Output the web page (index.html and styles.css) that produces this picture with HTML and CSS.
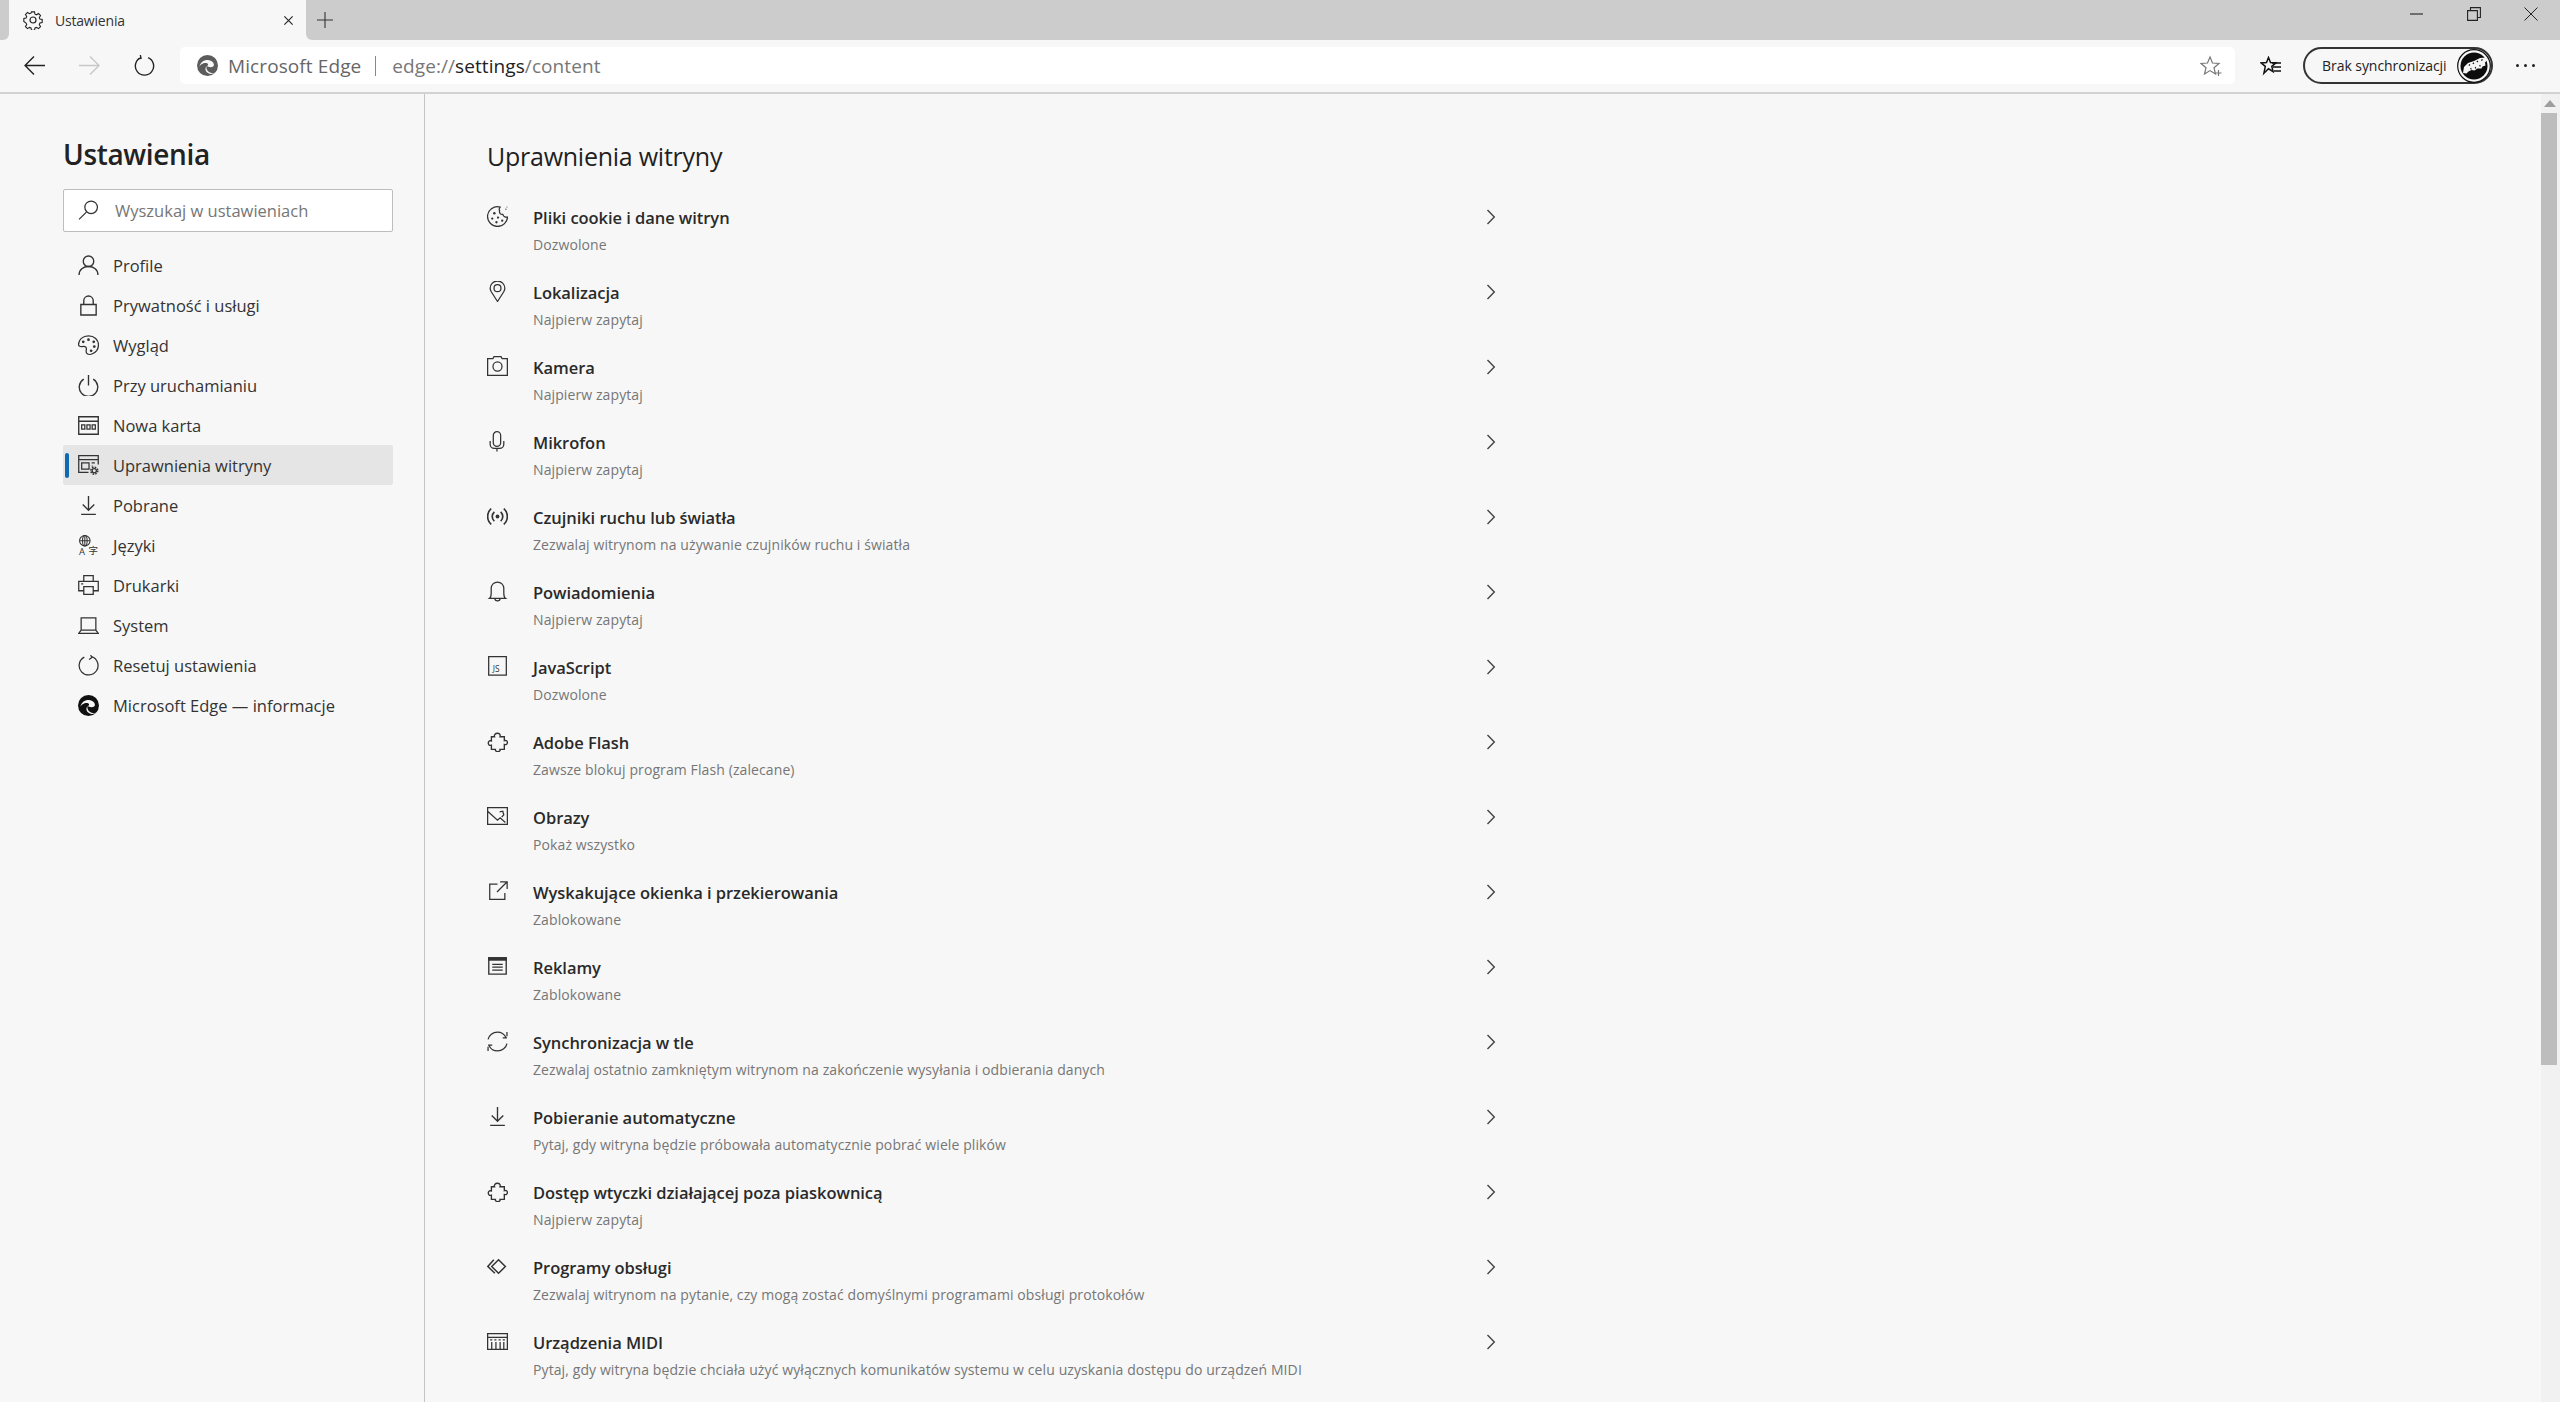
FILE: index.html
```html
<!DOCTYPE html>
<html lang="pl">
<head>
<meta charset="utf-8">
<title>Ustawienia</title>
<link rel="stylesheet" href="styles.css">
</head>
<body>
<svg class="defs" width="0" height="0" aria-hidden="true">
  <defs>
    <symbol id="edge" viewBox="0 0 20 20">
      <circle cx="10" cy="10" r="10" fill="currentColor"/>
      <path d="M2.2 11.5C3 7 6.500 4.500 10.500 4.700c3 .2 5.300 2 5.600 4.300.2 1.600-1.200 2.600-3.200 2.600-1.600 0-3-.4-3.400-1.100 1.300-.6 1.500-1.800.5-2.500C7.500 6.700 2.900 8.600 2.200 11.500z" fill="#f7f7f7"/>
      <path d="M9 10.500c-.5 3 1.500 6.500 5.500 6.800 1.500.1 3-.5 4-1.400-1.400 2-4.400 2.400-6.400 1.900-3.500-.9-5.300-4.300-3.100-7.300z" fill="#f7f7f7"/>
    </symbol>
    <symbol id="puzzle" viewBox="0 0 20 20">
      <path d="M7.200 5.500C5.800 1.200 13.800.8 12.400 5.500H16.500V9.200C20.400 7.800 20.400 14.200 16.500 12.800V17.500H12.400C13.600 20.400 7 20.400 8 17.500H4.200V13.500C.2 15 .2 8 4.200 9.500V5.500z" fill="none" stroke="currentColor" stroke-width="1.300" stroke-linejoin="miter"/>
    </symbol>
    <symbol id="download" viewBox="0 0 20 20">
      <path d="M10 1v13M4.500 9l5.500 5.500L15.500 9M3 18.500h14" fill="none" stroke="currentColor" stroke-width="1.300"/>
    </symbol>
    <symbol id="chev" viewBox="0 0 12 16">
      <path d="M2.500 1l6.800 7-6.800 7" fill="none" stroke="currentColor" stroke-width="1.400"/>
    </symbol>
  </defs>
</svg>

<header class="tabstrip">
  <div class="strip-left"></div>
  <div class="tab">
    <svg class="tab-gear" viewBox="0 0 20 20"><g fill="none" stroke="currentColor" stroke-width="1.200"><circle cx="10" cy="10" r="3"/><path d="M8.300 1h3.400l.5 2.500 1.700.7 2.200-1.400 2.300 2.300-1.400 2.200.7 1.700 2.500.5v3.400l-2.500.5-.7 1.700 1.400 2.200-2.300 2.300-2.200-1.400-1.700.7-.5 2.500H8.300l-.5-2.500-1.700-.7-2.200 1.400-2.300-2.300 1.400-2.200-.7-1.700L-.2 11.700V8.300l2.500-.5.7-1.700-1.400-2.200 2.300-2.300 2.200 1.400 1.700-.7z" transform="translate(1 1) scale(.9)"/></g></svg>
    <span class="tab-title">Ustawienia</span>
    <svg class="tab-close" viewBox="0 0 12 12"><path d="M1.500 1.500l9 9M10.500 1.500l-9 9" stroke="currentColor" stroke-width="1.200"/></svg>
  </div>
  <div class="strip-right">
    <svg class="tab-new" viewBox="0 0 16 16"><path d="M8 0v16M0 8h16" stroke="currentColor" stroke-width="1.100"/></svg>
    <div class="winctl">
      <svg class="wc" viewBox="0 0 14 14"><path d="M0 7h13" stroke="currentColor" stroke-width="1.100"/></svg>
      <svg class="wc" viewBox="0 0 14 14"><path d="M.6 3.600h9.800v9.800H.6zM3.500 3.500V.6h9.900v9.900h-3" fill="none" stroke="currentColor" stroke-width="1.100"/></svg>
      <svg class="wc" viewBox="0 0 14 14"><path d="M.5.500l13 13M13.500.500l-13 13" stroke="currentColor" stroke-width="1"/></svg>
    </div>
  </div>
</header>

<div class="toolbar">
  <button class="navbtn"><svg viewBox="0 0 20 20"><path d="M20 10H1M9.500 1.500L1 10l8.500 8.500" fill="none" stroke="#222" stroke-width="1.300"/></svg></button>
  <button class="navbtn"><svg viewBox="0 0 20 20"><path d="M0 10h19M10.500 1.500L19 10l-8.500 8.500" fill="none" stroke="#c8c8c8" stroke-width="1.300"/></svg></button>
  <button class="navbtn"><svg viewBox="0 0 20 20"><path d="M6.500 2.500A8.700 8.700 0 1 0 13.500 2.500M6 0l.7 3-3 .8" fill="none" stroke="#222" stroke-width="1.300"/></svg></button>
  <div class="addr">
    <svg class="addr-logo"><use href="#edge"/></svg>
    <span class="addr-brand">Microsoft Edge</span>
    <span class="addr-sep"></span>
    <span class="addr-url">edge://<b>settings</b>/content</span>
    <svg class="addr-star" viewBox="0 0 22 22"><path d="M10 2l2.500 6 6.500.5-5 4.200 1.500 6.300-5.500-3.400L4.500 19 6 12.700 1 8.500 7.500 8z" fill="none" stroke="#777" stroke-width="1.200"/><path d="M15.500 18h6M18.500 15v6" stroke="#777" stroke-width="1.200"/></svg>
  </div>
  <svg class="favs" viewBox="0 0 22 20"><path d="M8.500 1.500l2 5 5.500.4-4.200 3.500 1.300 5.300-4.600-2.900-4.600 4.400 1.400-6.800L1 6.900l5.500-.4z" fill="none" stroke="#111" stroke-width="1.500"/><path d="M12 7h9M13 11h8M14 15h7" stroke="#111" stroke-width="1.500"/></svg>
  <div class="sync">
    <span class="sync-text">Brak synchronizacji</span>
    <svg class="avatar" viewBox="0 0 34 34">
      <circle cx="17" cy="17" r="16.300" fill="#f7f7f7" stroke="#111" stroke-width="1.200"/>
      <circle cx="17" cy="17" r="13.500" fill="#0c0c0c"/>
      <path d="M6 24l1-6 4-4 6-2 6-3 6-.5 1 3-2 2 .5 3-3 1-1 2-4 0-3 2-3-.5-3 1.500-2 2z" fill="#f4f4f4"/>
      <path d="M12 15.500l.8 1M16 13.800l.8 1M20 12l.8 1M24.500 10.500l.8 1M13.500 20l1-.5M18 19l1-.5M22.500 17l1-.5" stroke="#111" stroke-width="1.500"/>
    </svg>
  </div>
  <div class="more"><i></i><i></i><i></i></div>
</div>

<div class="page">
  <aside class="sidebar">
    <h1 class="side-title">Ustawienia</h1>
    <div class="search">
      <svg class="ico" viewBox="0 0 20 20"><g fill="none" stroke="#333" stroke-width="1.200"><circle cx="12.500" cy="7" r="6"/><path d="M8 11.500L1 18.500"/></g></svg>
      <span class="search-text">Wyszukaj w ustawieniach</span>
    </div>
    <nav class="nav">
      <a class="nav-item"><svg class="ico" viewBox="0 0 20 20"><g fill="none" stroke="currentColor" stroke-width="1.300"><circle cx="10" cy="6" r="5"/><path d="M1 19c0-5 4-8 9-8s9 3 9 8"/></g></svg><span>Profile</span></a>
      <a class="nav-item"><svg class="ico" viewBox="0 0 20 20"><g fill="none" stroke="currentColor" stroke-width="1.300"><path d="M2.700 9h14.600v10H2.700zM5.500 9V5.500a4.500 4.500 0 0 1 9 0V9"/></g></svg><span>Prywatność i usługi</span></a>
      <a class="nav-item"><svg class="ico" viewBox="0 0 20 20"><g fill="none" stroke="currentColor" stroke-width="1.200"><path d="M10 .800C4.500.800.500 4.500.500 9c0 1.500 1.800 2.500 3.500 2 2-.6 4 .2 4 2 0 1.500-.7 2.700.2 4.300.9 1.500 3.800 1.400 6 .3 3-1.500 5.300-4.800 5.300-8.300C19.500 4.500 15.500.800 10 .800z"/></g><g fill="currentColor"><circle cx="5" cy="6.500" r="1.300"/><circle cx="10" cy="4.500" r="1.300"/><circle cx="15" cy="6.500" r="1.300"/><circle cx="15.500" cy="11" r="1.300"/><circle cx="12.500" cy="15" r="1.300"/></g></svg><span>Wygląd</span></a>
      <a class="nav-item"><svg class="ico" viewBox="0 0 20 20"><path d="M5.500 4A8.800 8.800 0 1 0 14.500 4M10 0v10" fill="none" stroke="currentColor" stroke-width="1.300"/></svg><span>Przy uruchamianiu</span></a>
      <a class="nav-item"><svg class="ico" viewBox="0 0 20 20"><path d="M.7 1.700h18.600v16.600H.7zM.7 6h18.600" fill="none" stroke="currentColor" stroke-width="1.300"/><path d="M3.500 9.500h3v4h-3zM8.500 9.500h3v4h-3zM13.500 9.500h3v4h-3z" fill="none" stroke="currentColor" stroke-width="1.200"/></svg><span>Nowa karta</span></a>
      <a class="nav-item is-active"><svg class="ico" viewBox="0 0 20 20"><g fill="none" stroke="currentColor" stroke-width="1.200"><path d="M10 16.500H.7V.700h18.600V9M.7 4.500h18.600M3.500 7.500h7v6h-7zM13 7.500h3M13 10.500h1"/><circle cx="15.500" cy="15" r="2"/><circle cx="15.500" cy="15" r="3.300" stroke-width="1.500" stroke-dasharray="1.500 1.100"/></g></svg><span>Uprawnienia witryny</span></a>
      <a class="nav-item"><svg class="ico"><use href="#download"/></svg><span>Pobrane</span></a>
      <a class="nav-item"><svg class="ico ico-lang" viewBox="0 0 20 20"><g fill="none" stroke="currentColor" stroke-width="1"><circle cx="6.500" cy="5.500" r="5"/><ellipse cx="6.500" cy="5.500" rx="2.200" ry="5"/><path d="M1.500 5.500h10M6.500.500v10"/></g><text class="ico-a" x="1" y="19.500">A</text><text class="ico-zi" x="10" y="18">字</text></svg><span>Języki</span></a>
      <a class="nav-item"><svg class="ico" viewBox="0 0 20 20"><path d="M5.500 6V.700h9V6M5.500 15H.700V6h18.600v9h-4.800M5.500 11h9v7.500h-9zM3 8.500h2" fill="none" stroke="currentColor" stroke-width="1.200"/></svg><span>Drukarki</span></a>
      <a class="nav-item"><svg class="ico" viewBox="0 0 20 20"><path d="M3 14.500V2.700h14v11.800M.7 17.500l2.300-3h14l2.300 3zM.7 17.500h18.600" fill="none" stroke="currentColor" stroke-width="1.200"/></svg><span>System</span></a>
      <a class="nav-item"><svg class="ico" viewBox="0 0 20 20"><path d="M6 2A9 9 0 1 0 13 1.500M12 0l1.200 2.400-2.700 1.800" fill="none" stroke="currentColor" stroke-width="1.200"/></svg><span>Resetuj ustawienia</span></a>
      <a class="nav-item"><svg class="ico ico-edge"><use href="#edge"/></svg><span>Microsoft Edge — informacje</span></a>
    </nav>
  </aside>

  <main class="content">
    <h2 class="content-title">Uprawnienia witryny</h2>
    <ul class="perm-list">
      <li class="perm"><svg class="ico" viewBox="0 0 20 20"><path d="M12.500 1C6.500-.5.500 4 .5 10c0 5.200 4.300 9.500 9.500 9.500s9.500-4.300 9.500-9c-2 .5-4-.5-4.500-2.500-2 .3-3.500-1.200-3-3.500-.7-1-.2-2.500.5-3.500z" fill="none" stroke="currentColor" stroke-width="1.200"/><g fill="currentColor"><circle cx="7" cy="7" r="1.200"/><circle cx="5" cy="12" r="1.100"/><circle cx="10.500" cy="11" r="1.100"/><circle cx="9" cy="15.500" r="1.100"/><circle cx="14.500" cy="14" r="1.100"/><circle cx="18" cy="3" r=".6"/><circle cx="19" cy="1" r=".5"/></g></svg><div class="perm-text"><div class="perm-name">Pliki cookie i dane witryn</div><div class="perm-sub">Dozwolone</div></div><svg class="chev"><use href="#chev"/></svg></li>
      <li class="perm"><svg class="ico" viewBox="0 0 20 20"><g fill="none" stroke="currentColor" stroke-width="1.200"><path d="M10 19.500L4.200 10.500C3.300 9 3 8 3 7a7 7 0 0 1 14 0c0 1-.3 2-1.200 3.500z"/><circle cx="10" cy="6.800" r="3.300"/></g></svg><div class="perm-text"><div class="perm-name">Lokalizacja</div><div class="perm-sub">Najpierw zapytaj</div></div><svg class="chev"><use href="#chev"/></svg></li>
      <li class="perm"><svg class="ico" viewBox="0 0 20 20"><g fill="none" stroke="currentColor" stroke-width="1.200"><path d="M.6 2.600h5l1-2h6.800l1 2h5v15.800H.6z"/><circle cx="10" cy="10" r="4.300"/></g></svg><div class="perm-text"><div class="perm-name">Kamera</div><div class="perm-sub">Najpierw zapytaj</div></div><svg class="chev"><use href="#chev"/></svg></li>
      <li class="perm"><svg class="ico" viewBox="0 0 20 20"><g fill="none" stroke="currentColor" stroke-width="1.200"><rect x="6" y=".6" width="7" height="14" rx="3.500"/><path d="M3 9.500v3c0 2.500 2 4 4 4h5c2 0 4-1.500 4-4v-3M9.500 16.500v3"/></g></svg><div class="perm-text"><div class="perm-name">Mikrofon</div><div class="perm-sub">Najpierw zapytaj</div></div><svg class="chev"><use href="#chev"/></svg></li>
      <li class="perm"><svg class="ico" viewBox="0 0 20 20"><g fill="none" stroke="currentColor" stroke-width="1.600"><path d="M4 2.500C-.5 6.500-.5 13.500 4 17.500M16 2.500c4.500 4 4.500 11 0 15M7 5.500c-2.700 2.500-2.700 6.500 0 9M13 5.500c2.700 2.500 2.700 6.500 0 9"/></g><circle cx="10" cy="10" r="1.800" fill="currentColor"/></svg><div class="perm-text"><div class="perm-name">Czujniki ruchu lub światła</div><div class="perm-sub">Zezwalaj witrynom na używanie czujników ruchu i światła</div></div><svg class="chev"><use href="#chev"/></svg></li>
      <li class="perm"><svg class="ico" viewBox="0 0 20 20"><path d="M2.500 16.500c1.500-1 1.500-2.500 1.500-5V7a6 6 0 0 1 12 0v4.500c0 2.500 0 4 1.500 5zM7.500 16.500a2.500 2.500 0 0 0 5 0" fill="none" stroke="currentColor" stroke-width="1.200"/></svg><div class="perm-text"><div class="perm-name">Powiadomienia</div><div class="perm-sub">Najpierw zapytaj</div></div><svg class="chev"><use href="#chev"/></svg></li>
      <li class="perm"><svg class="ico" viewBox="0 0 20 20"><path d="M1.600.7h16.800v17.600H1.600z" fill="none" stroke="currentColor" stroke-width="1.200"/><text class="ico-js" x="5.500" y="15.700">JS</text></svg><div class="perm-text"><div class="perm-name">JavaScript</div><div class="perm-sub">Dozwolone</div></div><svg class="chev"><use href="#chev"/></svg></li>
      <li class="perm"><svg class="ico"><use href="#puzzle"/></svg><div class="perm-text"><div class="perm-name">Adobe Flash</div><div class="perm-sub">Zawsze blokuj program Flash (zalecane)</div></div><svg class="chev"><use href="#chev"/></svg></li>
      <li class="perm"><svg class="ico" viewBox="0 0 20 20"><path d="M.6 1.600h18.800v15.800H.6zM.6 5l9.400 8.500 2.500-2.200 5 4.500M12 5.500l3-.5 1 3.500-2 2" fill="none" stroke="currentColor" stroke-width="1.200"/></svg><div class="perm-text"><div class="perm-name">Obrazy</div><div class="perm-sub">Pokaż wszystko</div></div><svg class="chev"><use href="#chev"/></svg></li>
      <li class="perm"><svg class="ico" viewBox="0 0 20 20"><path d="M10 3H2.600v14.400h14.400v-6M9.500 10.500L19 1M12.500.8h6.700v6.700" fill="none" stroke="currentColor" stroke-width="1.200"/></svg><div class="perm-text"><div class="perm-name">Wyskakujące okienka i przekierowania</div><div class="perm-sub">Zablokowane</div></div><svg class="chev"><use href="#chev"/></svg></li>
      <li class="perm"><svg class="ico" viewBox="0 0 20 20"><path d="M1.700 2h16.600v15.300H1.700z" fill="none" stroke="currentColor" stroke-width="1.300"/><path d="M1 1h18v3.500H1z" fill="currentColor"/><path d="M5 8h10M5 10.700h10M5 13.400h10" stroke="currentColor" stroke-width="1.200"/></svg><div class="perm-text"><div class="perm-name">Reklamy</div><div class="perm-sub">Zablokowane</div></div><svg class="chev"><use href="#chev"/></svg></li>
      <li class="perm"><svg class="ico" viewBox="0 0 20 20"><path d="M1 8c.8-4 4.500-7 9-7 3.500 0 6.500 2 8 5M19 5v-4M19 6.500h-4M19 12c-.8 4-4.500 7-9 7-3.500 0-6.500-2-8-5M1 15v4M1 13.500h4" fill="none" stroke="currentColor" stroke-width="1.200"/></svg><div class="perm-text"><div class="perm-name">Synchronizacja w tle</div><div class="perm-sub">Zezwalaj ostatnio zamkniętym witrynom na zakończenie wysyłania i odbierania danych</div></div><svg class="chev"><use href="#chev"/></svg></li>
      <li class="perm"><svg class="ico"><use href="#download"/></svg><div class="perm-text"><div class="perm-name">Pobieranie automatyczne</div><div class="perm-sub">Pytaj, gdy witryna będzie próbowała automatycznie pobrać wiele plików</div></div><svg class="chev"><use href="#chev"/></svg></li>
      <li class="perm"><svg class="ico"><use href="#puzzle"/></svg><div class="perm-text"><div class="perm-name">Dostęp wtyczki działającej poza piaskownicą</div><div class="perm-sub">Najpierw zapytaj</div></div><svg class="chev"><use href="#chev"/></svg></li>
      <li class="perm"><svg class="ico" viewBox="0 0 20 20"><path d="M6.500 3.500L.8 10l6.700 6.500M11 3.500l6.500 6.500-6.500 6.500L4.500 10z" fill="none" stroke="currentColor" stroke-width="1.400"/></svg><div class="perm-text"><div class="perm-name">Programy obsługi</div><div class="perm-sub">Zezwalaj witrynom na pytanie, czy mogą zostać domyślnymi programami obsługi protokołów</div></div><svg class="chev"><use href="#chev"/></svg></li>
      <li class="perm"><svg class="ico" viewBox="0 0 20 20"><path d="M.6 2.600h18.800v14.800H.6zM.6 6h18.800M4.500 10.500v7M8.500 10.500v7M12.500 10.500v7M16 10.500v7" fill="none" stroke="currentColor" stroke-width="1.200"/><path d="M3 8.500h2M7 8.500h2M11 8.500h2M15 8.500h2" stroke="currentColor" stroke-width="1.200"/></svg><div class="perm-text"><div class="perm-name">Urządzenia MIDI</div><div class="perm-sub">Pytaj, gdy witryna będzie chciała użyć wyłącznych komunikatów systemu w celu uzyskania dostępu do urządzeń MIDI</div></div><svg class="chev"><use href="#chev"/></svg></li>
    </ul>
  </main>

  <div class="scrollbar">
    <div class="sb-up"></div>
    <div class="sb-thumb"></div>
  </div>
</div>
</body>
</html>
```

FILE: styles.css
```css
* { box-sizing: border-box; }
html, body { margin: 0; height: 100%; overflow: hidden; }
body {
  display: flex;
  flex-direction: column;
  background: #f7f7f7;
  color: #222;
  font-family: "Open Sans", "Noto Sans", sans-serif;
}
.defs { position: absolute; }

/* tab strip */
.tabstrip {
  flex: none;
  height: 40px;
  background: #f7f7f7;
  display: flex;
}
.strip-left { width: 9px; flex: none; background: #cccccc; border-bottom-right-radius: 6px; }
.strip-right {
  flex: 1;
  background: #cccccc;
  border-bottom-left-radius: 6px;
  display: flex;
  padding-left: 11px;
}
.tab {
  flex: none;
  width: 297px;
  height: 40px;
  display: flex;
  align-items: center;
  padding: 0 12px 0 14px;
  color: #222;
}
.tab-gear { width: 20px; height: 20px; flex: none; margin-right: 12px; }
.tab-title { flex: 1; font-size: 14px; letter-spacing: -.2px; color: #333; }
.tab-close { width: 11px; height: 11px; flex: none; }
.tab-new { width: 16px; height: 16px; flex: none; margin-top: 12px; color: #333; }
.winctl {
  margin-left: auto;
  display: flex;
  align-items: flex-start;
  padding: 7px 22px 0 0;
  gap: 43px;
  color: #222;
}
.wc { width: 14px; height: 14px; display: block; }

/* toolbar */
.toolbar {
  flex: none;
  height: 54px;
  background: #f7f7f7;
  border-bottom: 2px solid #d2d2d2;
  display: flex;
  align-items: center;
  padding: 0 0 1px 7px;
}
.navbtn {
  width: 55px;
  height: 37px;
  padding: 0;
  flex: none;
  border: 0;
  background: none;
  display: flex;
  align-items: center;
  justify-content: center;
}
.navbtn svg { width: 21px; height: 21px; }
.addr {
  margin-left: 8px;
  width: 2055px;
  flex: none;
  height: 37px;
  background: #fff;
  border-radius: 5px;
  display: flex;
  align-items: center;
  padding-left: 17px;
  color: #666;
}
.addr-logo { width: 21px; height: 21px; flex: none; margin-right: 10px; color: #5c5c5c; }
.addr-brand { font-size: 19px; letter-spacing: .1px; color: #666; }
.addr-sep { width: 1px; height: 20px; background: #888; margin: 0 16px 0 14px; }
.addr-url { font-size: 19px; letter-spacing: .08px; color: #777; }
.addr-url b { font-weight: 400; color: #222; }
.addr-star { width: 22px; height: 22px; margin-left: auto; margin-right: 13px; flex: none; }
.favs { width: 22px; height: 20px; flex: none; margin-left: 25px; }
.sync {
  flex: none;
  width: 190px;
  height: 37px;
  margin-left: 21px;
  border: 2px solid #333;
  border-radius: 19px;
  display: flex;
  align-items: center;
  padding-left: 17px;
  background: #f7f7f7;
}
.sync-text { font-size: 14px; letter-spacing: -.05px; color: #222; white-space: nowrap; }
.avatar { width: 34px; height: 34px; margin-left: auto; flex: none; }
.more { display: flex; gap: 5px; margin-left: 23px; }
.more i { width: 3px; height: 3px; border-radius: 50%; background: #222; display: block; }

/* page */
.page { flex: 1; min-height: 0; display: flex; }
.sidebar {
  flex: none;
  width: 425px;
  height: 100%;
  border-right: 1px solid #c4c4c4;
  padding: 40px 31px 0 63px;
}
.side-title {
  margin: 0;
  font-size: 28px;
  line-height: 40px;
  font-weight: 600;
  letter-spacing: -.35px;
  color: #222;
}
.search {
  margin-top: 15px;
  height: 43px;
  border: 1px solid #bdbdbd;
  border-radius: 2px;
  background: #fff;
  display: flex;
  align-items: center;
  padding-left: 14px;
}
.search .ico { margin-right: 16px; }
.search-text { font-size: 16.5px; color: #767676; }
.ico { width: 21px; height: 21px; flex: none; color: #333; display: block; }
.ico-edge { color: #111; }
.ico-lang { overflow: visible; }
.nav { margin-top: 13px; display: flex; flex-direction: column; }
.nav-item {
  height: 40px;
  display: flex;
  align-items: center;
  padding-left: 15px;
  gap: 14px;
  font-size: 16.5px;
  color: #333;
  border-radius: 2px;
  position: relative;
}
.nav-item.is-active { background: #e5e5e5; }
.nav-item.is-active::before {
  content: "";
  position: absolute;
  left: 2px;
  top: 8px;
  width: 4px;
  height: 25px;
  border-radius: 2px;
  background: #0f6ab4;
}
.ico-a { font-size: 9px; fill: currentColor; }
.ico-zi { font-size: 9px; fill: currentColor; font-family: "Noto Sans CJK SC", sans-serif; }
.ico-js { font-size: 8px; fill: currentColor; }

/* main */
.content { flex: 1; min-width: 0; padding: 43px 0 0 62px; overflow: hidden; }
.content-title {
  margin: 0;
  font-size: 25px;
  line-height: 38px;
  font-weight: 500;
  letter-spacing: -.25px;
  color: #1f1f1f;
}
.perm-list { list-style: none; margin: 23px 0 0; padding: 0; width: 1010px; }
.perm {
  height: 75px;
  display: flex;
  align-items: flex-start;
  padding-top: 8px;
}
.perm > .ico { margin: 0 25px 0 0; width: 21px; height: 21px; }
.perm-text { flex: 1; min-width: 0; }
.perm-name { font-size: 16.5px; line-height: 24px; font-weight: 600; letter-spacing: -.05px; color: #2a2a2a; }
.perm-sub { font-size: 14px; line-height: 20px; margin-top: 5px; letter-spacing: .1px; color: #767676; }
.chev { width: 12px; height: 16px; margin-top: 3px; flex: none; color: #444; }

/* scrollbar */
.scrollbar { flex: none; width: 19px; height: 100%; background: #f1f1f1; padding-top: 6px; }
.sb-up {
  width: 0; height: 0;
  margin: 0 0 6px 3px;
  border-left: 6px solid transparent;
  border-right: 6px solid transparent;
  border-bottom: 7px solid #9e9e9e;
}
.sb-thumb { width: 16px; height: 952px; background: #bdbdbd; }
```
